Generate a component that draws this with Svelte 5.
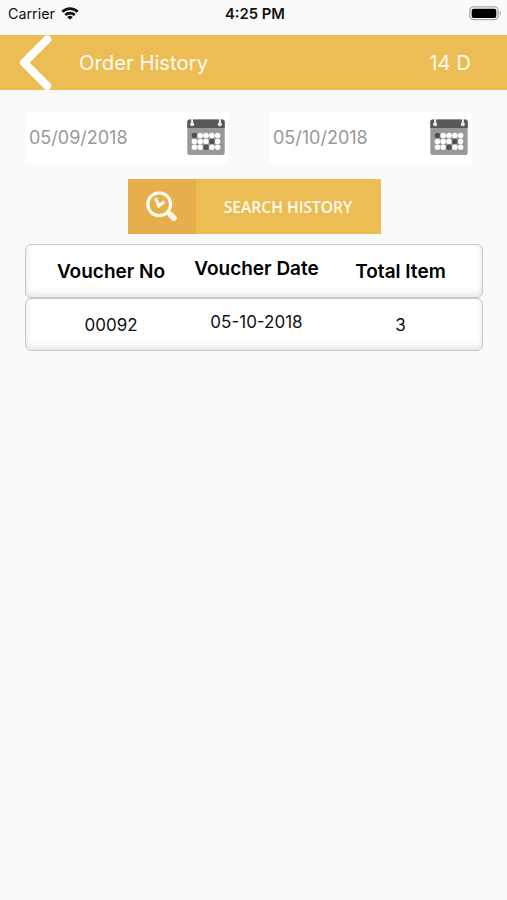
<script lang="ts">
	type Order = { voucherNo: string; voucherDate: string; totalItem: number };

	let dates = $state(['05/09/2018', '05/10/2018']);
	let orders = $state<Order[]>([{ voucherNo: '00092', voucherDate: '05-10-2018', totalItem: 3 }]);

	// calendar days drawn darker than the rest, by index in the 5x3 grid
	const markedDays = [0, 8, 12];
	const days = Array.from({ length: 15 }, (_, i) => i);
</script>

<div class="screen">
	<div class="status-bar">
		<div class="carrier">
			<span>Carrier</span>
			<svg width="18" height="13" viewBox="0 0 18 13" aria-hidden="true">
				<g fill="none" stroke="#111" stroke-width="2.6">
					<path d="M1.3 4.8a11 11 0 0 1 15.4 0" />
					<path d="M4.2 8a7 7 0 0 1 9.6 0" />
				</g>
				<path d="M6.2 10a4.2 4.2 0 0 1 5.6 0L9 12.8z" fill="#111" />
			</svg>
		</div>
		<span class="time">4:25 PM</span>
		<svg class="battery" width="33" height="15" viewBox="0 0 33 15" aria-hidden="true">
			<rect x="0.9" y="0.9" width="28.2" height="12.8" rx="3.8" fill="#fafafa" stroke="#aaa" stroke-width="1.3" />
			<rect x="2.7" y="2.7" width="24.6" height="9.2" rx="2" fill="#000" />
			<path d="M30.7 5.2c1.6.6 1.6 3.6 0 4.2z" fill="#999" />
		</svg>
	</div>

	<header class="header">
		<button type="button" class="back-button" aria-label="Back">
			<svg width="34" height="55" viewBox="0 0 34 55">
				<path d="M28.2 4.4 5 27.6l23.2 23.2" fill="none" stroke="#fff" stroke-width="8" stroke-linecap="round" stroke-linejoin="round" />
			</svg>
		</button>
		<h1>Order History</h1>
		<span class="range">14 D</span>
	</header>

	<main>
		<div class="date-row">
			{#each dates as date}
				<button type="button" class="date-field">
					<span>{date}</span>
					<svg width="38" height="37" viewBox="0 0 38 37" aria-hidden="true">
						<rect x="0.3" y="0.5" width="37.4" height="35.5" rx="2.5" fill="#999" />
						<path d="M.3 9V3A2.5 2.5 0 0 1 2.8.5h32.4A2.5 2.5 0 0 1 37.7 3v6z" fill="#585858" />
						<g fill="#eee">
							<rect x="4.1" y="0" width="2" height="5" />
							<circle cx="5.1" cy="5.2" r="2" />
							<rect x="31.9" y="0" width="2" height="5" />
							<circle cx="32.9" cy="5.2" r="2" />
						</g>
						{#each days as day}
							<circle
								cx={7.4 + (day % 5) * 5.8}
								cy={16.6 + Math.floor(day / 5) * 5.8}
								r="2.75"
								fill={markedDays.includes(day) ? '#505050' : '#fff'}
							/>
						{/each}
					</svg>
				</button>
			{/each}
		</div>

		<button type="button" class="search-button">
			<span class="search-icon">
				<svg width="34" height="34" viewBox="0 0 34 34" aria-hidden="true">
					<g fill="none" stroke="#fffaf0">
						<circle cx="14.2" cy="14.2" r="11.4" stroke-width="3.2" />
						<path d="m10.4 8 3.4 7.6 5.6-3.8" stroke-width="3.4" />
						<path d="m22.4 22 3 2.4" stroke-width="3" />
						<path d="m25 24.3 4 3.8" stroke-width="5.6" stroke-linecap="round" />
					</g>
				</svg>
			</span>
			<span class="search-label">SEARCH HISTORY</span>
		</button>

		<div class="orders">
			<div class="row heading">
				<span>Voucher No</span>
				<span class="date">Voucher Date</span>
				<span>Total Item</span>
			</div>
			{#each orders as order}
				<div class="row">
					<span>{order.voucherNo}</span>
					<span class="date">{order.voucherDate}</span>
					<span>{order.totalItem}</span>
				</div>
			{/each}
		</div>
	</main>
</div>

<style>
	:global(body) {
		background: #fafafa;
	}

	.screen {
		box-sizing: border-box;
		min-height: 900px;
		background: #fafafa;
		color: #111;
		font-family: Inter, 'Liberation Sans', sans-serif;
	}

	button {
		padding: 0;
		border: none;
		font: inherit;
		cursor: pointer;
	}

	svg {
		display: block;
		flex-shrink: 0;
	}

	.status-bar {
		display: grid;
		grid-template-columns: 1fr auto 1fr;
		align-items: center;
		box-sizing: border-box;
		height: 35px;
		padding: 0 5px 8px 8px;
		font-size: 14.3px;
	}

	.carrier {
		display: flex;
		align-items: center;
		gap: 6px;
	}

	.time {
		font-size: 14.8px;
		font-weight: 600;
	}

	.battery {
		justify-self: end;
	}

	.header {
		display: flex;
		align-items: center;
		height: 55px;
		padding: 0 36px 0 19px;
		background: #ebbd54;
		color: #fffaf0;
		font-size: 20.3px;
	}

	.back-button {
		background: none;
	}

	h1 {
		margin: 0 auto 0 26px;
		font-size: inherit;
		font-weight: 400;
	}

	main {
		padding: 22px 25px 0;
	}

	.date-row {
		display: flex;
		gap: 41px;
	}

	.date-field {
		display: flex;
		align-items: center;
		justify-content: space-between;
		box-sizing: border-box;
		width: 203px;
		height: 52px;
		padding: 0 3px 1px 4px;
		background: #fff;
		color: #999;
		font-size: 18px;
	}

	.date-field:last-child {
		padding-right: 4px;
	}

	.search-button {
		display: flex;
		width: 253px;
		height: 55px;
		margin: 15px 0 0 102.5px;
		background: #ebbd54;
		color: #fffaf0;
	}

	.search-icon {
		display: flex;
		align-items: center;
		justify-content: center;
		width: 68px;
		height: 55px;
		background: #e6af4b;
	}

	.search-label {
		flex: 1;
		align-self: center;
		font-family: 'Open Sans', 'Noto Sans', sans-serif;
		font-size: 15.6px;
		font-weight: 600;
	}

	.orders {
		margin-top: 10px;
	}

	.row {
		display: grid;
		grid-template-columns: 170px 121px 167px;
		align-items: center;
		box-sizing: border-box;
		width: 458px;
		height: 53.5px;
		padding-top: 2px;
		border: 1px solid #c9c9c9;
		border-radius: 6px;
		background: #fff;
		box-shadow:
			inset 0 -5px 6px -2px #e6e6e6,
			inset 3px 0 4px -2px #eee,
			inset -3px 0 4px -2px #eee;
		font-size: 17px;
		text-align: center;
		white-space: nowrap;
	}

	.row .date {
		padding-bottom: 6px;
		margin: 0 -5px;
	}

	.heading {
		color: #000;
		font-size: 19px;
		font-weight: 600;
	}
</style>
